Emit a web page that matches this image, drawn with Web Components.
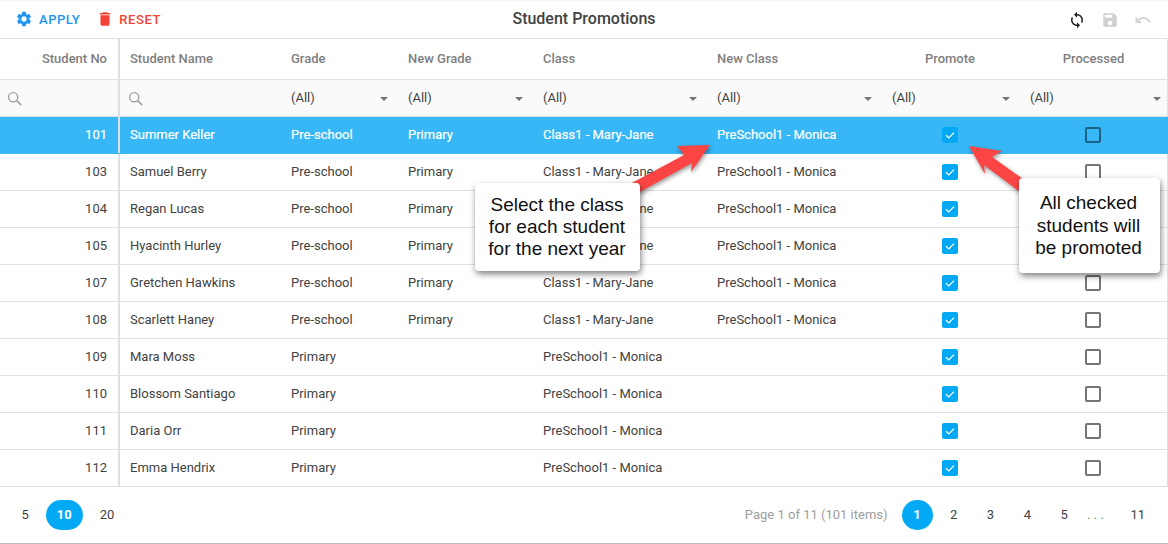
<!DOCTYPE html>
<html lang="en"><head><meta charset="utf-8"><title>Student Promotions</title>
<style>
html,body{margin:0;padding:0;background:#fff}
body{font:13px Roboto,sans-serif;color:#424242}
</style></head><body>
<student-promotions>
  <grid-toolbar slot="toolbar" title="Student Promotions"></grid-toolbar>
  <grid-header slot="head"></grid-header>
  <grid-filter slot="head"></grid-filter>
  <student-row selected no="101" name="Summer Keller" grade="Pre-school" newgrade="Primary" cls="Class1 - Mary-Jane" newcls="PreSchool1 - Monica"></student-row>
  <student-row no="103" name="Samuel Berry" grade="Pre-school" newgrade="Primary" cls="Class1 - Mary-Jane" newcls="PreSchool1 - Monica"></student-row>
  <student-row no="104" name="Regan Lucas" grade="Pre-school" newgrade="Primary" cls="Class1 - Mary-Jane" newcls="PreSchool1 - Monica"></student-row>
  <student-row no="105" name="Hyacinth Hurley" grade="Pre-school" newgrade="Primary" cls="Class1 - Mary-Jane" newcls="PreSchool1 - Monica"></student-row>
  <student-row no="107" name="Gretchen Hawkins" grade="Pre-school" newgrade="Primary" cls="Class1 - Mary-Jane" newcls="PreSchool1 - Monica"></student-row>
  <student-row no="108" name="Scarlett Haney" grade="Pre-school" newgrade="Primary" cls="Class1 - Mary-Jane" newcls="PreSchool1 - Monica"></student-row>
  <student-row no="109" name="Mara Moss" grade="Primary" newgrade="" cls="PreSchool1 - Monica" newcls=""></student-row>
  <student-row no="110" name="Blossom Santiago" grade="Primary" newgrade="" cls="PreSchool1 - Monica" newcls=""></student-row>
  <student-row no="111" name="Daria Orr" grade="Primary" newgrade="" cls="PreSchool1 - Monica" newcls=""></student-row>
  <student-row no="112" name="Emma Hendrix" grade="Primary" newgrade="" cls="PreSchool1 - Monica" newcls=""></student-row>
  <grid-pager slot="foot"></grid-pager>
  <note-arrow slot="over" points="710,145 677,146 684,155 630,184 638,193 692,163 691,172"></note-arrow>
  <note-arrow slot="over" points="969,146 1002,151 992,157 1030,184 1020,192 984,165 985,174"></note-arrow>
  <note-callout slot="over" style="left:475px;top:183px;width:165px;height:88px;padding:.5px 1px 0 0">Select the class<br>for each student<br>for the next year</note-callout>
  <note-callout slot="over" style="left:1019px;top:178px;width:141px;height:95px;padding:.5px 2px 0 0">All checked<br>students will<br>be promoted</note-callout>
</student-promotions>
<script>
const COLS='120px 160px 117px 135px 174px 175px 138px 149px';
const ICON={
 gear:'M19.14 12.94c.04-.3.06-.61.06-.94 0-.32-.02-.64-.07-.94l2.03-1.58c.18-.14.23-.41.12-.61l-1.92-3.32c-.12-.22-.37-.29-.59-.22l-2.39.96c-.5-.38-1.03-.7-1.62-.94l-.36-2.54c-.04-.24-.24-.41-.48-.41h-3.84c-.24 0-.43.17-.47.41l-.36 2.54c-.59.24-1.13.57-1.62.94l-2.39-.96c-.22-.08-.47 0-.59.22L2.74 8.87c-.12.21-.08.47.12.61l2.03 1.58c-.05.3-.09.63-.09.94s.02.64.07.94l-2.03 1.58c-.18.14-.23.41-.12.61l1.92 3.32c.12.22.37.29.59.22l2.39-.96c.5.38 1.03.7 1.62.94l.36 2.54c.05.24.24.41.48.41h3.84c.24 0 .44-.17.47-.41l.36-2.54c.59-.24 1.13-.56 1.62-.94l2.39.96c.22.08.47 0 .59-.22l1.92-3.32c.12-.22.07-.47-.12-.61l-2.01-1.58zM12 15.6c-1.98 0-3.6-1.62-3.6-3.6s1.62-3.6 3.6-3.6 3.6 1.62 3.6 3.6-1.62 3.6-3.6 3.6z',
 trash:'M6 19c0 1.1.9 2 2 2h8c1.1 0 2-.9 2-2V7H6v12zM19 4h-3.5l-1-1h-5l-1 1H5v2h14V4z',
 sync:'M12 4V1L8 5l4 4V6c3.31 0 6 2.69 6 6 0 1.01-.25 1.97-.7 2.8l1.46 1.46C19.54 15.03 20 13.57 20 12c0-4.42-3.58-8-8-8zm0 14c-3.31 0-6-2.69-6-6 0-1.01.25-1.97.7-2.8L5.24 7.74C4.46 8.97 4 10.43 4 12c0 4.42 3.58 8 8 8v3l4-4-4-4v3z',
 save:'M17 3H5c-1.11 0-2 .9-2 2v14c0 1.1.89 2 2 2h14c1.1 0 2-.9 2-2V7l-4-4zm-5 16c-1.66 0-3-1.34-3-3s1.34-3 3-3 3 1.34 3 3-1.34 3-3 3zm3-10H5V5h10v4z',
 undo:'M12.5 8c-2.65 0-5.05.99-6.9 2.6L2 7v9h9l-3.62-3.62c1.39-1.16 3.16-1.88 5.12-1.88 3.54 0 6.55 2.31 7.6 5.5l2.37-.78C21.08 11.03 17.15 8 12.5 8z'
};
const svg=(n,c)=>`<svg width="18" height="18" viewBox="0 0 24 24" aria-hidden="true"><path fill="${c}" d="${ICON[n]}"/></svg>`;
const def=(name,render)=>customElements.define(name,class extends HTMLElement{
  connectedCallback(){ if(this.shadowRoot) return; this.attachShadow({mode:'open'}).innerHTML=render(this); }
});

def('student-promotions',()=>`<style>
  :host{display:flex;flex-direction:column;position:relative;width:1168px;height:544px;overflow:hidden;background:#fff;
    font:13px Roboto,sans-serif;color:#424242;box-sizing:border-box}
  .over{position:absolute;inset:0;pointer-events:none}
  .rows{display:block}
</style>
<slot name="toolbar"></slot><slot name="head"></slot><div class="rows"><slot></slot></div><slot name="foot"></slot>
<div class="over"><slot name="over"></slot></div>`);

def('grid-toolbar',h=>`<style>
  :host{display:grid;grid-template-columns:1fr auto 1fr;align-items:center;height:38px;border-bottom:1px solid #e0e0e0;box-shadow:inset 0 1px #f7f7f7}
  .l,.r{display:flex;align-items:center}
  .l{padding-left:15px;gap:16px}
  .r{justify-content:flex-end;padding-right:16px;gap:15px}
  .b{display:flex;align-items:center;gap:6px;font-weight:500;font-size:13px;letter-spacing:.55px}
  .a{color:#2196f3}.x{color:#f44336;gap:5px}
  .b svg{margin-top:-1px}
  .r svg{display:block;margin-top:1px}
  h1{margin:0 0 2px 0;font:500 16px Roboto,sans-serif;color:#424242}
</style>
<div class="l"><span class="b a">${svg('gear','#2196f3')}APPLY</span><span class="b x">${svg('trash','#f44336')}RESET</span></div>
<h1>${h.getAttribute('title')}</h1>
<div class="r">${svg('sync','#212121')}${svg('save','#cfcfcf')}${svg('undo','#d6d6d6')}</div>`);

def('grid-header',()=>`<style>
  :host{display:grid;grid-template-columns:${COLS};height:40px;border-bottom:1px solid #e0e0e0;border-right:1px solid #e0e0e0;width:1167px;
    color:#7f7f7f;font:500 13px Roboto,sans-serif}
  div{display:flex;align-items:center;padding:0 11px 2px;min-width:0}
  .n{justify-content:flex-end;border-right:2px solid #e0e0e0;padding-right:11px}
  .f{padding-left:10px}.c{justify-content:center}
</style>
<div class="n">Student No</div><div class="f">Student Name</div><div>Grade</div><div>New Grade</div><div>Class</div><div>New Class</div><div class="c">Promote</div><div class="c">Processed</div>`);

def('grid-filter',()=>{
  const s='<svg width="16" height="16" viewBox="0 0 16 16" fill="none" stroke="#a0a0a0" stroke-width="1.4" aria-hidden="true"><circle cx="6.2" cy="6.2" r="4.6"/><path d="M9.6 9.6l4.6 4.6" stroke-width="1.7"/></svg>';
  const d=(c='')=>`<div class="d ${c}"><span>(All)</span><i></i></div>`;
  return `<style>
  :host{display:grid;grid-template-columns:${COLS};height:36px;background:#fafafa;border-bottom:1px solid #e0e0e0;border-right:1px solid #e0e0e0;width:1167px}
  div{display:flex;align-items:center;min-width:0}
  .s{padding-left:7px}.n{border-right:2px solid #e0e0e0}
  .s2{padding-left:8px}
  .d{justify-content:space-between;padding:0 9px 2px 11px;color:#424242}
  .e{padding-right:7px}
  i{width:0;height:0;border-left:4px solid transparent;border-right:4px solid transparent;border-top:4px solid #757575;margin-top:3px}
  svg{display:block;margin-top:1px}
</style><div class="s n">${s}</div><div class="s s2">${s}</div>${d().repeat(5)}${d('e')}`;
});

def('grid-check',h=>{
  const on=h.hasAttribute('checked');
  return `<style>
  :host{display:block;width:16px;height:16px;box-sizing:border-box;border-radius:2px;
    ${on?'background:#03a9f4':'border:2px solid var(--box,#757575)'}}
  svg{display:block}
</style>${on?'<svg width="16" height="16" viewBox="0 0 16 16" aria-hidden="true"><path d="M4 8.2l2.8 2.7L12 5.6" fill="none" stroke="#fff" stroke-width="1.3"/></svg>':''}`;
});

def('student-row',h=>{
  const a=k=>h.getAttribute(k)||'';
  const sel=h.hasAttribute('selected');
  return `<style>
  :host{display:grid;grid-template-columns:${COLS};height:36px;border-bottom:1px solid #e0e0e0;border-right:1px solid #e0e0e0;width:1167px;
    ${sel?'background:#37b7f5;color:#fff;-webkit-text-stroke:.2px #fff;--box:#1b6288;border-bottom-color:#37b7f5;border-right-color:#37b7f5':''}}
  div{display:flex;align-items:center;padding:0 11px 2px;min-width:0;white-space:nowrap}
  .n{justify-content:flex-end;border-right:2px solid #e0e0e0}
  .f{padding-left:10px}.c{justify-content:center;padding-bottom:0}
  .l{padding-right:12px}
</style>
<div class="n">${a('no')}</div><div class="f">${a('name')}</div><div>${a('grade')}</div><div>${a('newgrade')}</div><div>${a('cls')}</div><div>${a('newcls')}</div>
<div class="c"><grid-check checked></grid-check></div><div class="c l"><grid-check></grid-check></div>`;
});

def('grid-pager',()=>`<style>
  :host{display:flex;justify-content:space-between;align-items:center;height:56px;border-bottom:1px solid #bdbdbd;padding:0 11px 0 10px;width:1147px}
  .g{display:flex;align-items:center}
  .sz{gap:5.5px}.pg{gap:5.5px}
  b{display:block;font-weight:400;height:30px;line-height:30px;text-align:center;border-radius:15px;padding:0 11.5px;color:#424242}
  .pg b{padding:0 12px;min-width:7px}
  .sz b.on{width:37px;padding:0;box-sizing:border-box}
  .pg b.on{width:31px;padding:0;box-sizing:border-box}
  .on{background:#03a9f4;color:#fff;font-weight:700}
  .info{color:#9e9e9e;margin-right:8.5px;padding-bottom:1px}
  .dots{width:25.6px;padding-left:2px;letter-spacing:3.5px;color:#757575;font-size:12px}
</style>
<div class="g sz"><b>5</b><b class="on" style="font-weight:700">10</b><b>20</b></div>
<div class="g pg"><span class="info">Page 1 of 11 (101 items)</span><b class="on">1</b><b>2</b><b>3</b><b>4</b><b>5</b><span class="dots">...</span><b>11</b></div>`);

def('note-callout',()=>`<style>
  :host{position:absolute;display:flex;align-items:center;justify-content:center;text-align:center;box-sizing:border-box;background:#fff;border-radius:4px;
    box-shadow:1px 3px 6px rgba(0,0,0,.5);font:19px/22.4px "Liberation Sans",Arial,sans-serif;color:#111}
</style><div><slot></slot></div>`);

def('note-arrow',h=>`<style>
  :host{position:absolute;inset:0;display:block}
  svg{position:absolute;left:0;top:0;filter:drop-shadow(1px 2px 2px rgba(0,0,0,.4))}
</style><svg width="1168" height="544" aria-hidden="true"><polygon fill="#fb4545" points="${h.getAttribute('points')}"/></svg>`);
</script>
</body></html>
